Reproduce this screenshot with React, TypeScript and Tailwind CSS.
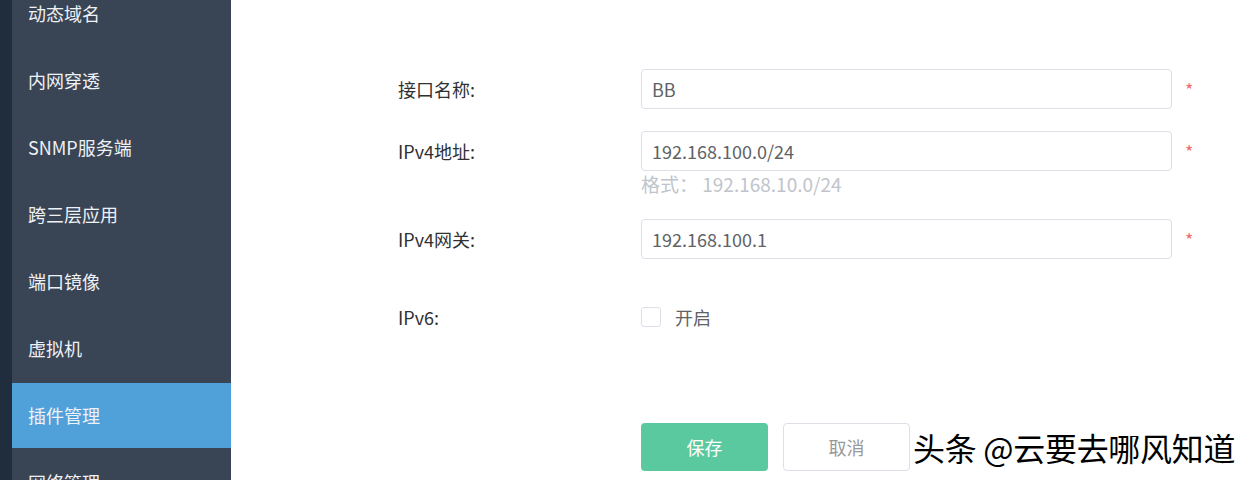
const menu = ["动态域名", "内网穿透", "SNMP服务端", "跨三层应用", "端口镜像", "虚拟机", "插件管理", "网络管理"];

const font = { fontFamily: "'Noto Sans CJK SC', 'Noto Sans', sans-serif" };

function Field({ label, value, hint }: { label: string; value: string; hint?: string }) {
  return (
    <div className="flex items-start">
      <div className="w-[243px] h-10 flex items-center text-[18px] text-[#303133]">{label}</div>
      <div className="flex flex-col">
        <div className="flex items-center">
          <div className="w-[531px] h-10 border border-[#dcdfe6] rounded-[4px] px-[10px] flex items-center text-[18px] text-[#606266]">
            {value}
          </div>
          <span className="ml-[13px] text-[#f56c6c] text-[18px]">*</span>
        </div>
        {hint && <div className="h-[26px] flex items-center text-[19px] text-[#c0c4cc]">{hint}</div>}
      </div>
    </div>
  );
}

export default function App() {
  return (
    <div className="w-[1252px] h-[480px] flex overflow-hidden bg-white relative" style={font}>
      <div className="w-[12px] h-full bg-[#1f2d3d]" />
      <div className="w-[219px] h-full bg-[#394454] overflow-hidden">
        <div className="flex flex-col gap-[2px] mt-[-19px]">
          {menu.map((m) => (
            <div
              key={m}
              className={`h-[65px] flex items-center pl-[16px] text-[18px] text-[#eef1f6] ${
                m === "插件管理" ? "bg-[#50a0da]" : ""
              }`}
            >
              {m}
            </div>
          ))}
        </div>
      </div>
      <div className="flex-1 pl-[167px] pt-[69px]">
        <div className="flex flex-col">
          <Field label="接口名称:" value="BB" />
          <div className="h-[22px]" />
          <Field label="IPv4地址:" value="192.168.100.0/24" hint="格式： 192.168.10.0/24" />
          <div className="h-[22px]" />
          <Field label="IPv4网关:" value="192.168.100.1" />
          <div className="flex items-center mt-[38px] h-10">
            <div className="w-[243px] text-[18px] text-[#303133]">IPv6:</div>
            <div className="w-[20px] h-[20px] border border-[#dcdfe6] rounded-[3px] bg-white" />
            <span className="ml-[14px] text-[18px] text-[#606266]">开启</span>
          </div>
          <div className="flex mt-[86px] ml-[243px] gap-[15px]">
            <button className="w-[127px] h-[48px] rounded-[4px] bg-[#5bc9a0] text-white text-[18px]">保存</button>
            <button className="w-[127px] h-[48px] rounded-[4px] border border-[#dcdfe6] bg-white text-[#999999] text-[18px]">
              取消
            </button>
          </div>
        </div>
      </div>
      <div
        className="absolute left-[913px] top-[423px] text-[32px] text-black tracking-[-0.3px]"
        style={{ textShadow: "1px 1px 0 #fff, -1px -1px 0 #fff" }}
      >
        头条 @云要去哪风知道
      </div>
    </div>
  );
}
